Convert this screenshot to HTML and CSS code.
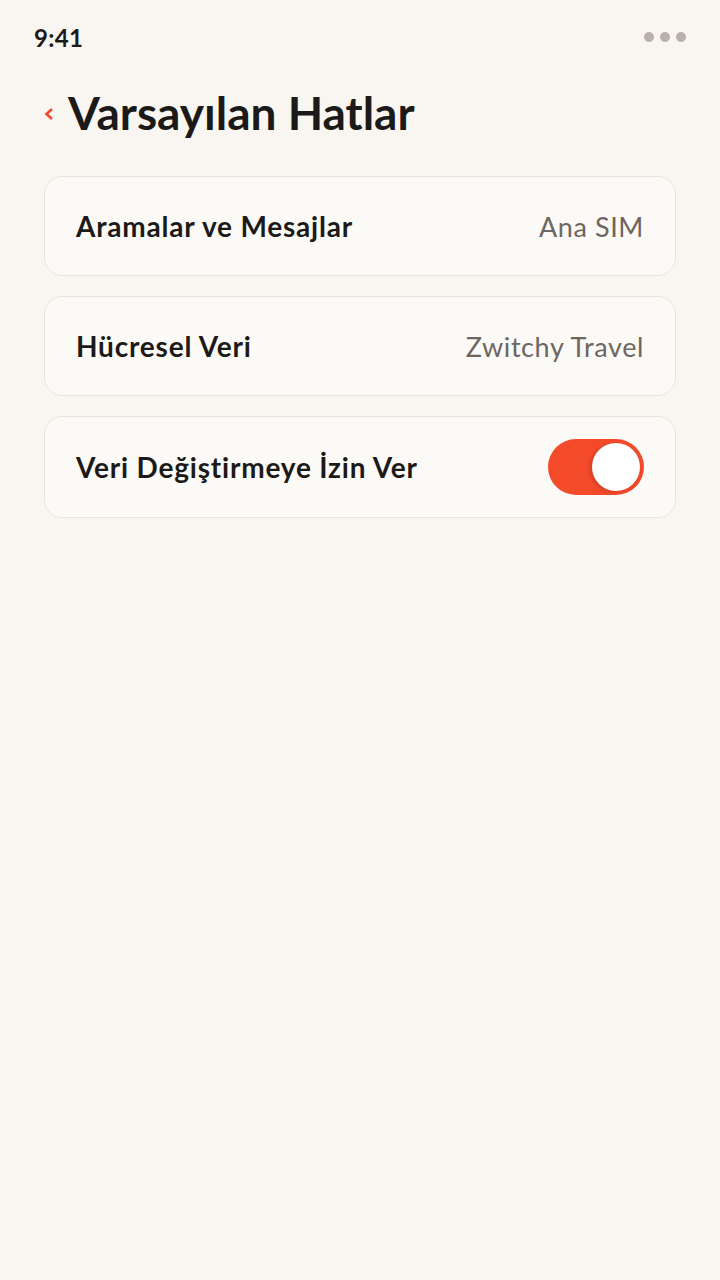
FILE: index.html
```html
<!DOCTYPE html>
<html lang="tr">
<head>
  <meta charset="UTF-8" />
  <title>Varsayılan Hatlar</title>
  <link rel="stylesheet" href="styles.css">
</head>
<body>
  <div class="status-bar">
    <span class="time">9:41</span>
    <span class="dots"><i></i><i></i><i></i></span>
  </div>

  <div class="header">
    <button class="back-btn" aria-label="Geri">
      <svg width="10" height="12" viewBox="0 0 10 12">
        <path d="M8 1 L2.5 6 L8 11" fill="none" stroke="#f04a2a" stroke-width="2.6" stroke-linejoin="miter"/>
      </svg>
    </button>
    <h1>Varsayılan Hatlar</h1>
  </div>

  <div class="list">
    <div class="row">
      <span class="label">Aramalar ve Mesajlar</span>
      <span class="value">Ana SIM</span>
    </div>
    <div class="row">
      <span class="label">Hücresel Veri</span>
      <span class="value">Zwitchy Travel</span>
    </div>
    <div class="row row-toggle">
      <span class="label">Veri Değiştirmeye İzin Ver</span>
      <span class="toggle on"><span class="knob"></span></span>
    </div>
  </div>
</body>
</html>
```

FILE: styles.css
```css
body {
  margin: 0;
  font-family: Lato, "Open Sans", sans-serif;
  background-color: #f9f6f2;
  color: #1c1a18;
}

.status-bar {
  display: flex;
  justify-content: space-between;
  align-items: center;
  height: 74px;
  padding: 0 34px;
}

.time {
  font-size: 24px;
  font-weight: 700;
  letter-spacing: 0.3px;
}

.dots {
  display: flex;
  gap: 6px;
}

.dots i {
  display: block;
  width: 10px;
  height: 10px;
  border-radius: 50%;
  background-color: #b8b1aa;
}

.header {
  display: flex;
  align-items: center;
  gap: 14px;
  padding: 4px 44px 0;
  height: 68px;
}

.back-btn {
  padding: 0;
  border: none;
  background: none;
  display: flex;
  align-items: center;
  margin-top: 4px;
}

h1 {
  margin: 0;
  font-size: 46px;
  font-weight: 700;
  letter-spacing: 0;
}

.list {
  display: flex;
  flex-direction: column;
  gap: 20px;
  padding: 30px 44px 0;
}

.row {
  display: flex;
  justify-content: space-between;
  align-items: center;
  height: 98px;
  padding: 0 31px;
  background-color: #fcfaf7;
  border: 1px solid #ebe3da;
  border-radius: 18px;
}

.row-toggle {
  height: 100px;
}

.label {
  font-size: 28px;
  font-weight: 700;
  letter-spacing: 0.8px;
}

.value {
  font-size: 27px;
  letter-spacing: 0.6px;
  color: #6d6661;
}

.toggle {
  display: flex;
  align-items: center;
  width: 96px;
  height: 56px;
  border-radius: 28px;
  background-color: #f34a2a;
  box-sizing: border-box;
  padding: 4px;
  justify-content: flex-end;
}

.knob {
  width: 48px;
  height: 48px;
  border-radius: 50%;
  background-color: #ffffff;
  box-shadow: -2px 1px 4px rgba(0,0,0,0.15);
}
```
